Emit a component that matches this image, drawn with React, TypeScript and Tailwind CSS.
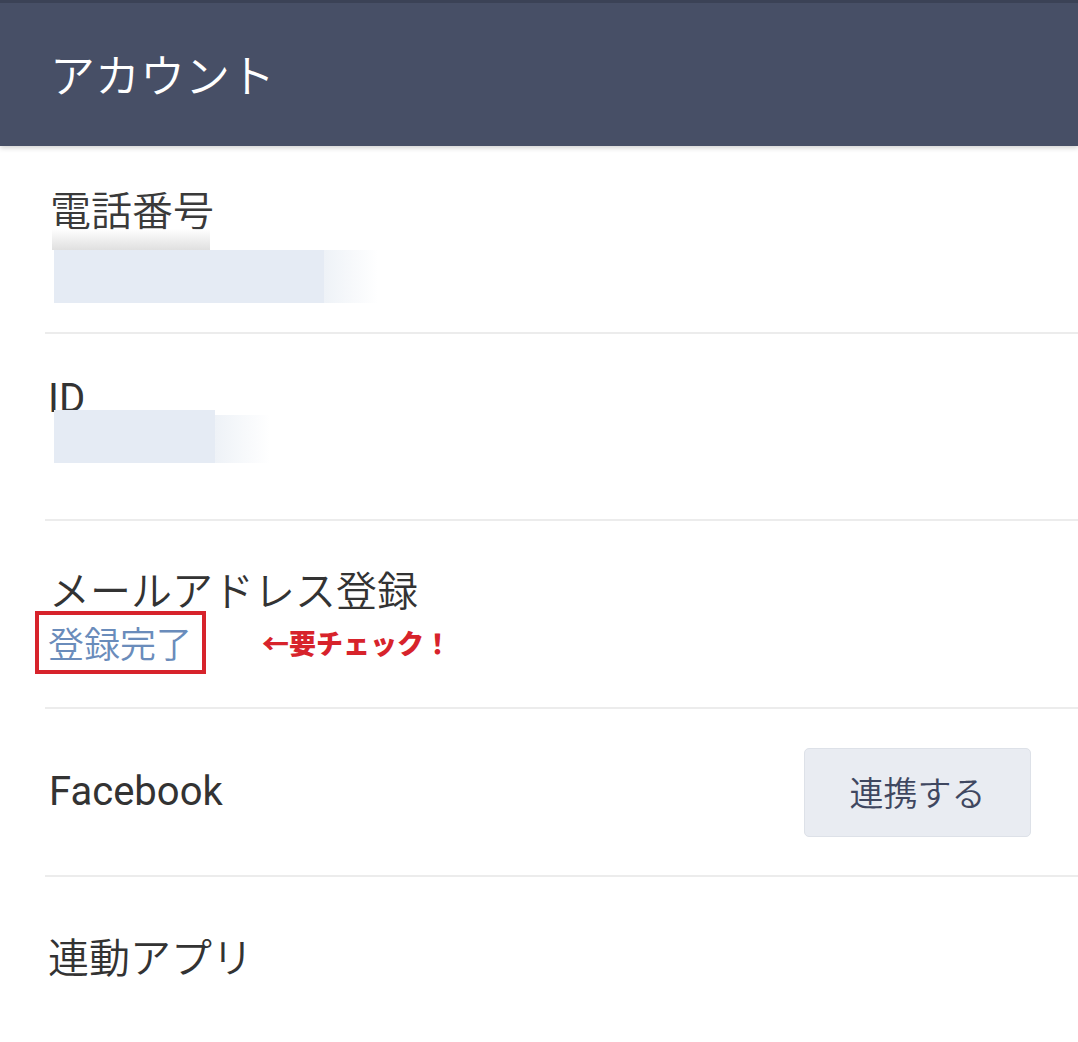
const cjk = "font-['Noto_Sans_CJK_JP',sans-serif]";
const latin = "font-['Roboto','Noto_Sans_CJK_JP',sans-serif]";

const Row = ({
  className,
  children,
}: {
  className: string;
  children: React.ReactNode;
}) => (
  <div className={`ml-[45px] border-b-2 border-[#ececec] ${className}`}>
    {children}
  </div>
);

// blurred-out personal data, kept as flat colour blocks
const Masked = ({ main, tail }: { main: string; tail: string }) => (
  <div className="flex">
    <div className={`${main} bg-[#e5ebf4]`} />
    <div className={`${tail} bg-linear-to-r from-[#eef2f7] to-white`} />
  </div>
);

const App = () => {
  return (
    <div className={`w-[1078px] h-[1042px] overflow-hidden bg-white text-[#333333] font-[350] ${cjk}`}>
      <header className="relative z-10 h-[146px] flex items-center pl-[50px] bg-[#474f66] border-t-[3px] border-[#3b4256] shadow-[0_2px_5px_rgba(0,0,0,0.18)]">
        <h1 className="text-[45px] leading-none text-white -mt-[2px]">アカウント</h1>
      </header>

      {/* phone number */}
      <Row className="h-[188px] pt-[42px] pl-[5px]">
        <div className="text-[41px] leading-none text-[#3a3a3a]">電話番号</div>
        <div className="ml-[2px] w-[158px] h-[21px] bg-linear-to-b from-white to-[#d8d8d8] opacity-80" />
        <div className="ml-[4px]">
          <Masked main="w-[270px] h-[53px]" tail="w-[54px] h-[53px]" />
        </div>
      </Row>

      {/* ID */}
      <Row className="h-[187px] pt-[45px] pl-[3px]">
        <div className={`${latin} font-normal text-[40px] leading-none`}>ID</div>
        <div className="-mt-[9px] ml-[6px]">
          <Masked main="w-[161px] h-[53px]" tail="w-[55px] h-[48px] mt-[5px]" />
        </div>
      </Row>

      {/* mail address */}
      <Row className="h-[188px] pt-[47px] pl-[4px]">
        <div className="text-[41px] leading-none">メールアドレス登録</div>
        <div className="mt-[2px] flex items-center">
          <div className="-ml-[14px] w-[171px] h-[63px] border-[4px] border-[#d7232b] pl-[9px] pt-[9px]">
            <span className="block text-[36px] leading-none text-[#6a8cbb]">登録完了</span>
          </div>
          <span className="ml-[56px] text-[27px] leading-none font-black text-[#d7232b]">
            ←要チェック！
          </span>
        </div>
      </Row>

      {/* facebook */}
      <Row className="h-[168px] flex items-center justify-between pl-[4px] pr-[47px]">
        <span className={`${latin} font-normal text-[40px] leading-none`}>Facebook</span>
        <button className="w-[227px] h-[89px] rounded-[5px] bg-[#e9ecf2] border border-[#dde1e8] text-[34px] leading-none text-[#3f4760]">
          連携する
        </button>
      </Row>

      {/* linked apps */}
      <div className="ml-[45px] pt-[58px] pl-[3px]">
        <div className="text-[41px] leading-none">連動アプリ</div>
      </div>
    </div>
  );
};

export default App;
